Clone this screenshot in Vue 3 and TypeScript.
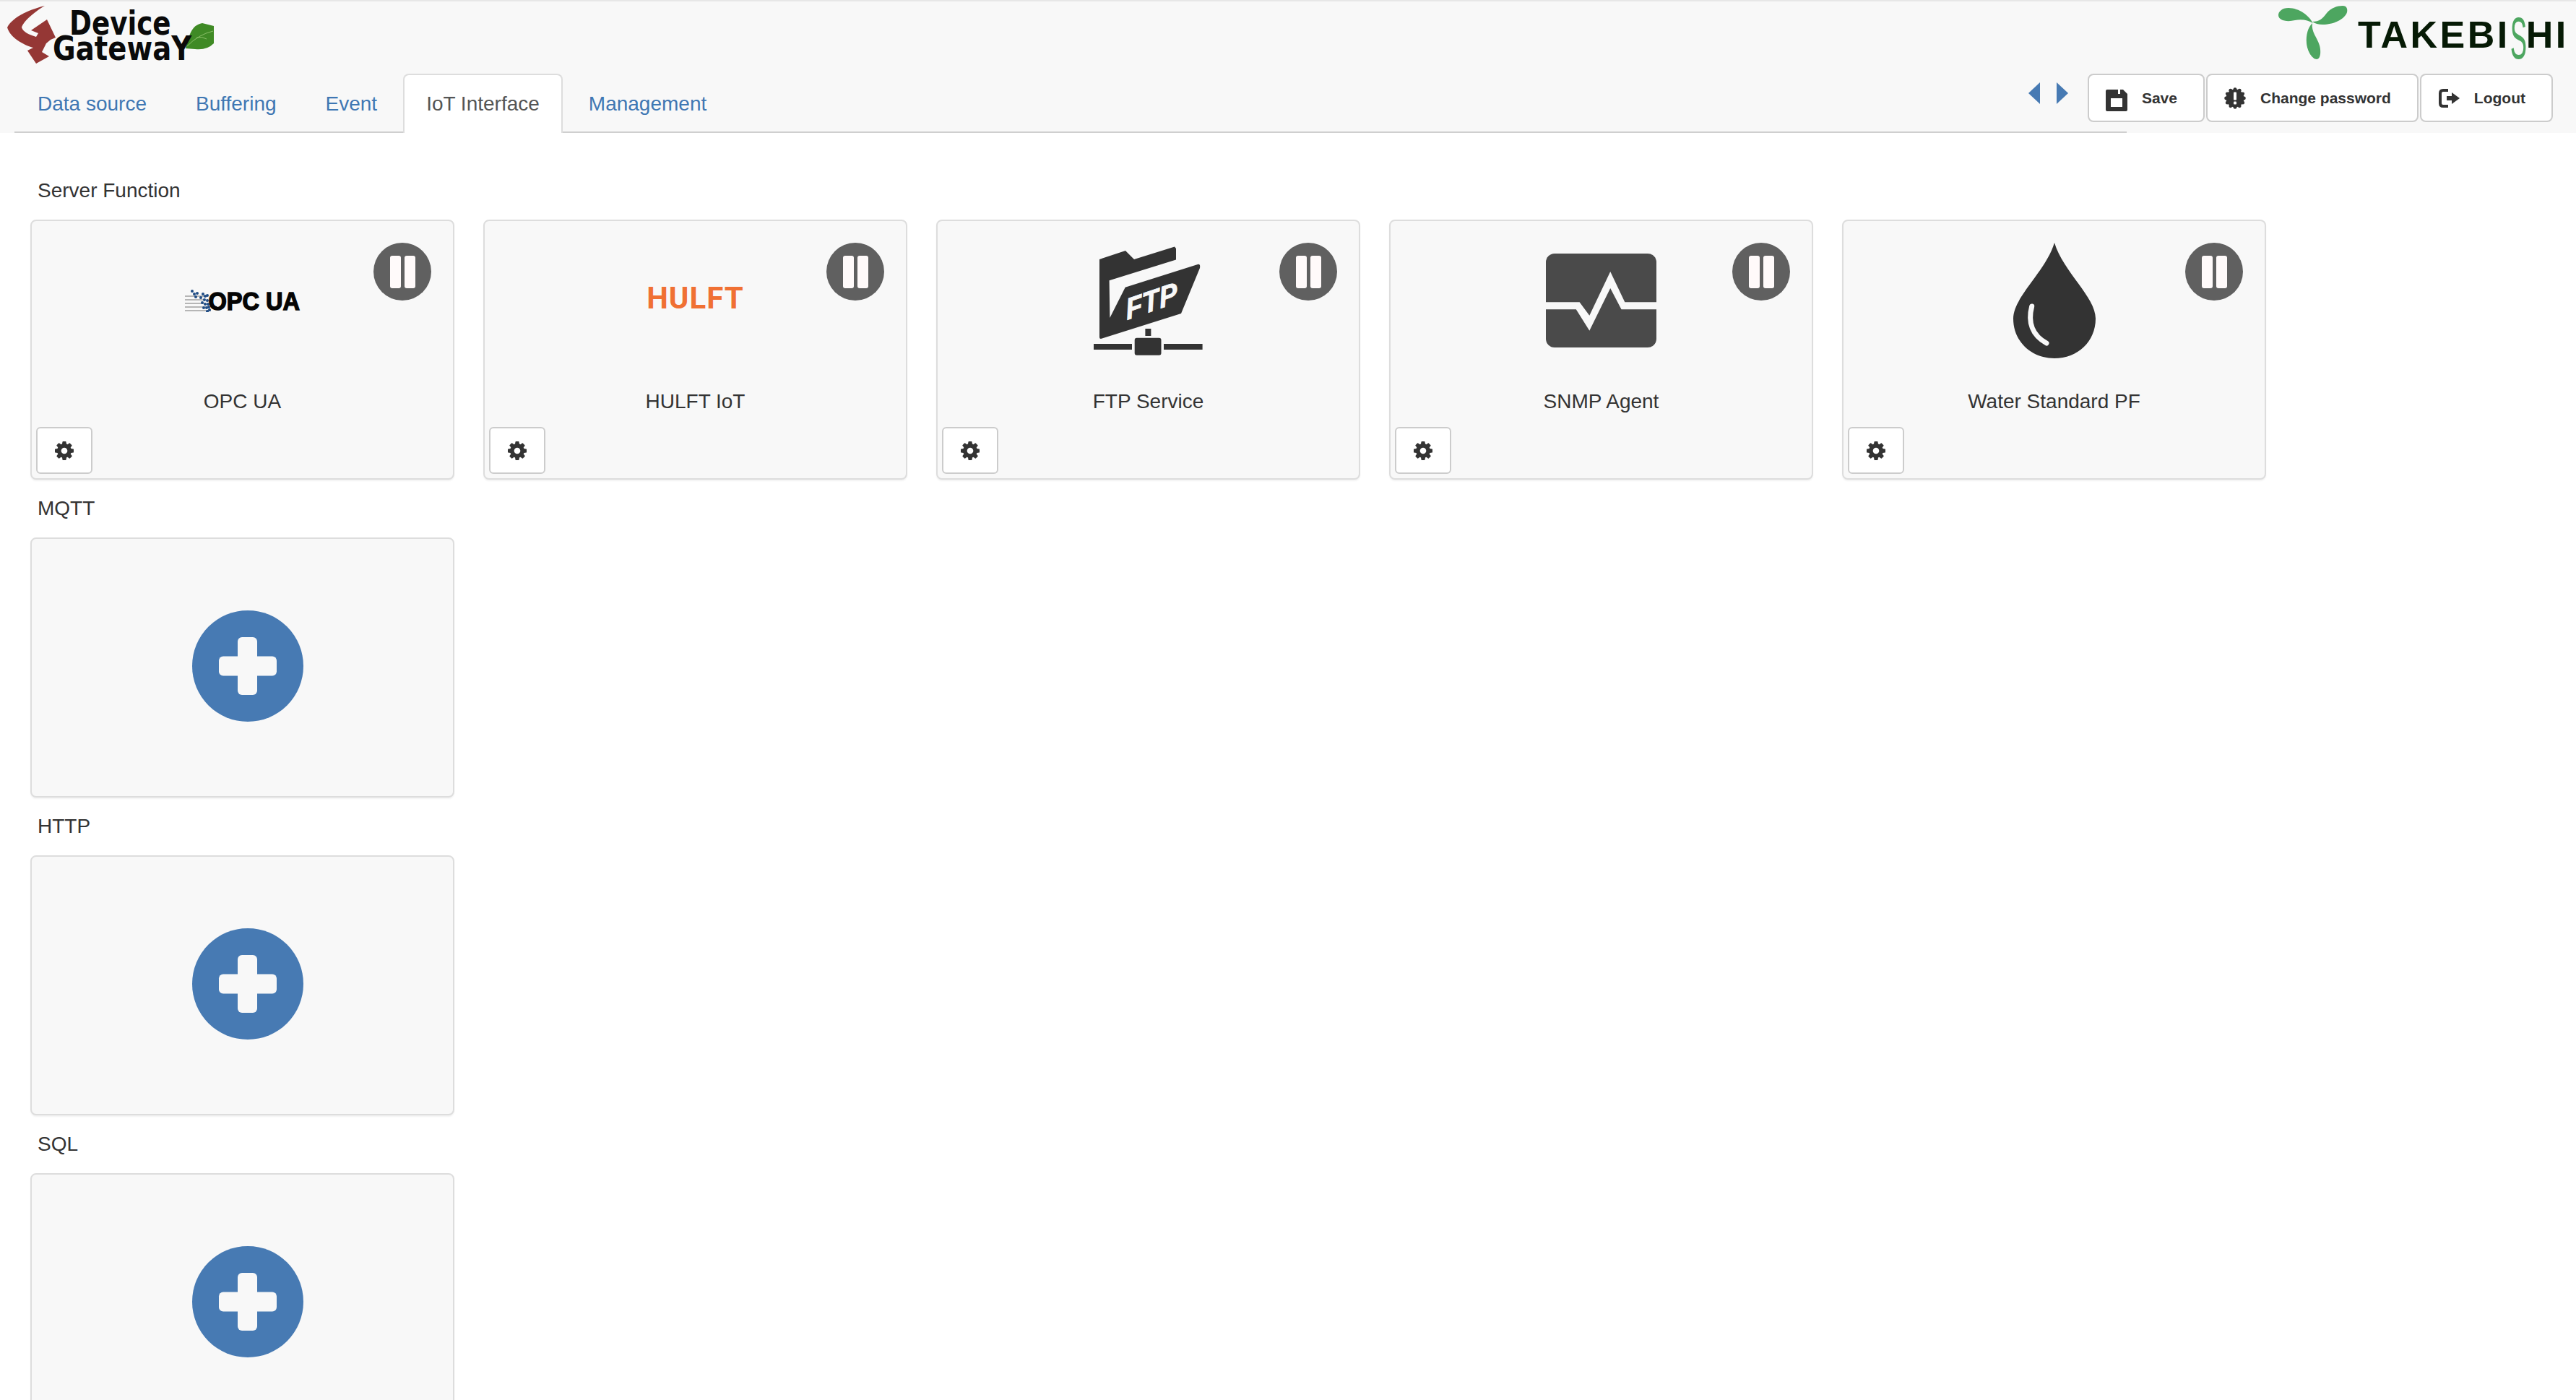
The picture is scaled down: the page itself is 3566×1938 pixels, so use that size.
<script setup lang="ts">
type Service = { name: string; art: 'opc' | 'hulft' | 'ftp' | 'snmp' | 'water' };

const tabs = ['Data source', 'Buffering', 'Event', 'IoT Interface', 'Management'];
const activeTab = 'IoT Interface';

const services: Service[] = [
  { name: 'OPC UA', art: 'opc' },
  { name: 'HULFT IoT', art: 'hulft' },
  { name: 'FTP Service', art: 'ftp' },
  { name: 'SNMP Agent', art: 'snmp' },
  { name: 'Water Standard PF', art: 'water' },
];

const addSections = ['MQTT', 'HTTP', 'SQL'];

const cogPath =
  'M1152 896q0-106-75-181t-181-75-181 75-75 181 75 181 181 75 181-75 75-181zm512-109v222q0 12-8 23t-20 13l-185 28q-19 54-39 91 35 50 107 138 10 12 10 25t-9 23q-27 37-99 108t-94 71q-12 0-26-9l-138-108q-44 23-91 38-16 136-29 186-7 28-36 28h-222q-14 0-24.500-8.500t-11.500-21.500l-28-184q-49-16-90-37l-141 107q-10 9-25 9-14 0-25-11-126-114-165-168-7-10-7-23 0-12 8-23 15-21 51-66.500t54-70.500q-27-50-41-99l-183-27q-13-2-21-12.500t-8-23.500v-222q0-12 8-23t19-13l186-28q14-46 39-92-40-57-107-138-10-12-10-24 0-10 9-23 26-36 98.500-107.500t94.500-71.500q13 0 26 10l138 107q44-23 91-38 16-136 29-186 7-28 36-28h222q14 0 24.500 8.500t11.500 21.500l28 184q49 16 90 37l142-107q9-9 24-9 13 0 25 10 129 119 165 170 7 8 7 22 0 12-8 23-15 21-51 66.500t-54 70.500q26 50 41 98l183 28q13 2 21 12.500t8 23.500z';

// scallops round the badge icon
const scallops = Array.from({ length: 12 }, (_, i) => ({
  cx: 15 + 12.4 * Math.cos((i * Math.PI) / 6),
  cy: 15 + 12.4 * Math.sin((i * Math.PI) / 6),
}));

const opcDots: [number, number][] = [
  [10, 12], [13, 16], [17, 15], [15, 20], [22, 21], [25, 16], [28, 19], [31, 18],
  [27, 24], [31, 25], [24, 28], [28, 30], [32, 30], [26, 35], [30, 35], [33, 34],
  [31, 40], [34, 38],
];
</script>

<template>
  <div class="page">
    <header class="navbar">
      <div class="brand-row">
        <div class="gateway-logo">
          <svg class="gateway-mark" viewBox="0 0 300 95" width="300" height="95" aria-hidden="true">
            <path
              fill="#953735"
              d="M62 8C45 12 18 22 10 38C14 52 32 62 46 66L38 70L50 88L68 78L58 72L64 60L70 55L77 52L65 27L43 42L53 46L50 51C40 48 32 44 30 38C32 30 48 16 62 8Z"
            />
            <path fill="#3f8a25" d="M257 67C262 50 264 35 280 32L296 36L296 60Q286 70 270 68Z" />
            <path fill="none" stroke="#8cc06a" stroke-width="1" d="M259 64Q274 48 295 43M272 52Q280 50 286 54" />
          </svg>
          <span class="gw-device">Device</span>
          <span class="gw-gateway">GatewaY</span>
        </div>
        <div class="takebishi-logo">
          <svg viewBox="0 0 100 76" width="100" height="76" aria-hidden="true">
            <g fill="#4da660">
              <path d="M48.700 24C44 14 30 3 15 3C6 3 1 8 1 13C1 20 12 23 24 20C34 18 42 20 48.700 24Z" />
              <path d="M48 22C58 22 62 18 68 10C74 3 82 0 90 0C96 0 97 5 96 9C93 18 80 25 65 26C58 26.500 52 25 48 22Z" />
              <path d="M48 24C42 30 39 40 40 52C41 63 48 74 54 74C60 74 60 62 58 55C55 44 46 36 48 24Z" />
            </g>
          </svg>
          <span class="takebishi-word">TAKEBI<span class="takebishi-s">S</span>HI</span>
        </div>
      </div>

      <div class="tab-row">
        <ul class="tabs">
          <li v-for="tab in tabs" :key="tab" class="tab" :class="{ active: tab === activeTab }">
            <a href="#">{{ tab }}</a>
          </li>
        </ul>

        <div class="tools">
          <div class="arrows">
            <svg viewBox="0 0 16 30" width="16" height="30" aria-hidden="true"><path d="M16 0V30L0 15Z" /></svg>
            <svg viewBox="0 0 16 30" width="16" height="30" aria-hidden="true"><path d="M0 0V30L16 15Z" /></svg>
          </div>
          <button type="button" class="btn">
            <svg class="btn-icon save" viewBox="0 0 30 30" aria-hidden="true">
              <path
                fill="#333"
                fill-rule="evenodd"
                d="M2 0H17V6H20V0H24L30 6V28Q30 30 28 30H2Q0 30 0 28V2Q0 0 2 0ZM7 12V24H23V12Z"
              />
            </svg>
            Save
          </button>
          <button type="button" class="btn">
            <svg class="btn-icon" viewBox="0 0 30 30" aria-hidden="true">
              <circle cx="15" cy="15" r="12.500" fill="#333" />
              <circle v-for="(s, i) in scallops" :key="i" :cx="s.cx" :cy="s.cy" r="2.400" fill="#333" />
              <rect x="13" y="6.500" width="4" height="11" rx="1" fill="#fff" />
              <rect x="13" y="19.500" width="4" height="4" rx="1" fill="#fff" />
            </svg>
            Change password
          </button>
          <button type="button" class="btn">
            <svg class="btn-icon" viewBox="0 0 30 26" aria-hidden="true">
              <path d="M14 2H7Q3 2 3 6V20Q3 24 7 24H14" fill="none" stroke="#333" stroke-width="4" />
              <path d="M12 10H19V5L30 13L19 21V16H12Z" fill="#333" />
            </svg>
            Logout
          </button>
        </div>
      </div>
    </header>

    <main class="content">
      <section class="section">
        <h2 class="section-title">Server Function</h2>
        <div class="cards">
          <article v-for="svc in services" :key="svc.name" class="card">
            <div class="pause">
              <span></span>
              <span></span>
            </div>

            <div class="art">
              <div v-if="svc.art === 'opc'" class="opc-logo">
                <span class="opc-word">OPC UA</span>
                <svg viewBox="0 0 62 32" width="62" height="32" aria-hidden="true">
                  <g stroke="#a0a0a0" stroke-width="1.500">
                    <path d="M0 10H30M0 15H28M0 20H28M0 25H32M0 30H36" />
                  </g>
                  <circle v-for="(d, i) in opcDots" :key="i" :cx="d[0]" :cy="d[1] - 9" r="2" fill="#1f4c85" />
                  <path d="M40 13L50 13L49 18L45 19L48 24L45 25L40 19Z" fill="#f8f8f8" />
                </svg>
              </div>

              <span v-else-if="svc.art === 'hulft'" class="hulft-logo">HULFT</span>

              <svg v-else-if="svc.art === 'ftp'" viewBox="0 0 151 151" width="151" height="151" aria-hidden="true">
                <g fill="#333">
                  <path
                    d="M8 18L44 6L56 18L112 0.500L114 3V18.500L21.600 47.300L22.400 99L43.700 56.700L144 25Q148 24 147 30L121 93L10 128Q8 128 8 126Z"
                  />
                  <rect x="71.400" y="114" width="8" height="10" />
                  <rect x="56.700" y="126.700" width="36.800" height="24" rx="3" />
                  <rect x="0" y="135" width="53" height="8" />
                  <rect x="97" y="135" width="53.600" height="8" />
                </g>
                <text class="ftp-text" transform="translate(46 102) rotate(-19) skewX(-12)">FTP</text>
              </svg>

              <svg v-else-if="svc.art === 'snmp'" viewBox="0 0 153 130" width="153" height="130" aria-hidden="true">
                <rect width="153" height="130" rx="12" fill="#4a4a4a" />
                <path
                  fill="#f8f8f8"
                  d="M0 67.300H46.600L60.300 85.700L89.200 25L109.300 67.300H153V77.300H104.500L89.200 48L60.300 106.700L41.800 77.300H0Z"
                />
              </svg>

              <svg v-else viewBox="0 0 114 160" width="114" height="160" aria-hidden="true">
                <path
                  fill="#333"
                  d="M57 0C45 40 0 75 0 105C0 137 25 160 57 160C89 160 114 137 114 105C114 75 69 40 57 0Z"
                />
                <path
                  fill="none"
                  stroke="#f8f8f8"
                  stroke-width="7"
                  stroke-linecap="round"
                  d="M25.700 88C20 110 26 128 46 139"
                />
              </svg>
            </div>

            <div class="card-label">{{ svc.name }}</div>

            <button type="button" class="gear-btn" aria-label="Settings">
              <svg viewBox="128 128 1536 1536" width="26" height="26" aria-hidden="true">
                <path fill="#333" :d="cogPath" />
              </svg>
            </button>
          </article>
        </div>
      </section>

      <section v-for="section in addSections" :key="section" class="section">
        <h2 class="section-title">{{ section }}</h2>
        <div class="cards">
          <article class="card card-add">
            <svg viewBox="0 0 154 154" width="154" height="154" aria-hidden="true">
              <circle cx="77" cy="77" r="77" fill="#477ab3" />
              <rect x="63" y="37" width="27" height="80" rx="6" fill="#f8f8f8" />
              <rect x="37" y="63.500" width="80" height="27" rx="6" fill="#f8f8f8" />
            </svg>
          </article>
        </div>
      </section>
    </main>
  </div>
</template>

<style>
html,
body {
  margin: 0;
  background: #fff;
}
</style>

<style scoped>
.page {
  height: 100vh;
  overflow: hidden;
  font-family: 'Liberation Sans', Arial, sans-serif;
  font-size: 28px;
  line-height: 40px;
  color: #333;
}

.navbar {
  background: #f8f8f8;
  border-top: 2px solid #e7e7e7;
}

.brand-row {
  display: flex;
  justify-content: space-between;
  height: 100px;
}

.gateway-logo {
  position: relative;
  width: 300px;
}

.gateway-mark {
  position: absolute;
  left: 0;
  top: -2px;
}

.gw-device,
.gw-gateway {
  position: absolute;
  font-family: 'DejaVu Sans', sans-serif;
  font-weight: 700;
  font-size: 46px;
  line-height: 34px;
  color: #0a0a0a;
  transform-origin: left top;
  white-space: nowrap;
}

.gw-device {
  left: 96px;
  top: 13px;
  transform: scaleX(0.81);
}

.gw-gateway {
  left: 73px;
  top: 48px;
  transform: scaleX(0.84);
}

.takebishi-logo {
  position: relative;
  width: 413px;
  padding: 6px 0 0;
  margin-left: auto;
}

.takebishi-word {
  position: absolute;
  left: 111px;
  top: 20px;
  font-weight: 700;
  font-size: 52px;
  line-height: 52px;
  letter-spacing: 3.5px;
  color: #061a05;
  white-space: nowrap;
}

.takebishi-s {
  display: inline-block;
  width: 22px;
  font-weight: 400;
  font-size: 82px;
  line-height: 0;
  color: #4da660;
  vertical-align: -15px;
  transform: scaleX(0.42);
  transform-origin: left center;
}

.tab-row {
  position: relative;
}

.tabs {
  display: flex;
  list-style: none;
  margin: 0 0 0 20px;
  padding: 0;
  width: 2924px;
  height: 82px;
  box-sizing: border-box;
  border-bottom: 2px solid #cfcfcf;
}

.tab {
  margin-right: 4px;
  height: 82px;
  box-sizing: border-box;
}

.tab a {
  display: block;
  padding: 20px 30px;
  border: 2px solid transparent;
  border-bottom: none;
  border-radius: 8px 8px 0 0;
  height: 80px;
  color: #3f77b3;
  text-decoration: none;
}

.tab.active a {
  background: #fff;
  border-color: #ddd;
  color: #555;
  height: 82px;
  box-sizing: border-box;
}

.tools {
  position: absolute;
  top: 0;
  right: 32px;
  display: flex;
  align-items: flex-start;
  gap: 2px;
}

.arrows {
  display: flex;
  gap: 23px;
  margin: 12px 25px 0 0;
}

.arrows svg {
  fill: #477ab3;
}

.btn {
  display: flex;
  align-items: center;
  height: 67px;
  padding: 0 36px 0 23px;
  background: #fff;
  border: 2px solid #ccc;
  border-radius: 8px;
  font: 700 21px 'Liberation Sans', Arial, sans-serif;
  color: #333;
}

.btn-icon {
  width: 30px;
  height: 30px;
  margin-right: 20px;
}

.btn-icon.save {
  margin-top: 6px;
}

.content {
  padding: 60px 0 0 42px;
}

.section {
  margin-bottom: 20px;
}

.section-title {
  margin: 0 0 20px;
  padding-left: 10px;
  font-size: 28px;
  font-weight: 400;
  line-height: 40px;
}

.cards {
  display: flex;
  gap: 40px;
}

.card {
  position: relative;
  width: 587px;
  height: 360px;
  box-sizing: border-box;
  display: flex;
  flex-direction: column;
  padding-top: 30px;
  background: #f8f8f8;
  border: 2px solid #ddd;
  border-radius: 8px;
  box-shadow: 0 2px 2px rgba(0, 0, 0, 0.05);
}

.card-add {
  align-items: center;
  justify-content: center;
  padding: 0 0 4px 14px;
}

.pause {
  position: absolute;
  top: 30px;
  right: 30px;
  width: 80px;
  height: 80px;
  border-radius: 50%;
  background: #606060;
  display: flex;
  align-items: center;
  justify-content: center;
  gap: 5px;
}

.pause span {
  width: 15px;
  height: 45px;
  border-radius: 3px;
  background: #fffafa;
}

.art {
  height: 160px;
  display: flex;
  align-items: center;
  justify-content: center;
}

.opc-logo {
  position: relative;
  width: 159px;
  height: 32px;
}

.opc-logo svg {
  position: absolute;
  left: 0;
  top: 0;
}

.opc-word {
  position: absolute;
  right: 0;
  top: 0;
  font-weight: 700;
  font-size: 35px;
  line-height: 34px;
  color: #050505;
  -webkit-text-stroke: 1.5px #050505;
  transform: scaleX(0.93);
  transform-origin: right center;
  white-space: nowrap;
}

.hulft-logo {
  font-family: Roboto, sans-serif;
  font-weight: 700;
  font-size: 42px;
  line-height: 42px;
  letter-spacing: 1px;
  color: #f07033;
  margin-top: -6px;
}

.ftp-text {
  font-family: 'Liberation Sans', Arial, sans-serif;
  font-weight: 700;
  font-style: italic;
  font-size: 40px;
  fill: #f8f8f8;
  stroke: #f8f8f8;
  stroke-width: 0.8px;
}

.card-label {
  margin-top: 40px;
  text-align: center;
}

.gear-btn {
  display: flex;
  align-items: center;
  justify-content: center;
  width: 78px;
  height: 65px;
  margin: 15px 0 0 6px;
  padding: 0;
  background: #fff;
  border: 2px solid #ccc;
  border-radius: 6px;
}
</style>
